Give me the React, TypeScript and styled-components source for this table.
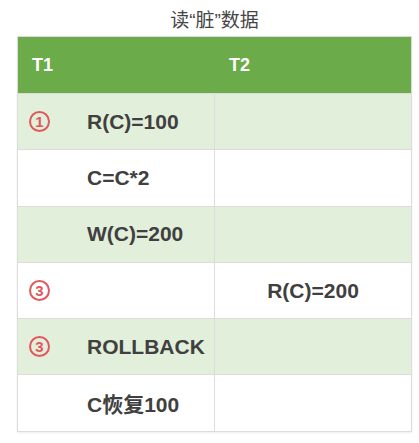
import styled, { createGlobalStyle } from "styled-components";

const GlobalStyle = createGlobalStyle`
  html, body {
    margin: 0;
    padding: 0;
    background: #ffffff;
  }
  body {
    font-family: "Liberation Sans", Arial, "Noto Sans CJK SC", sans-serif;
  }
`;

type Step = {
  mark?: string;
  t1?: string;
  t2?: string;
  shaded: boolean;
};

const steps: Step[] = [
  { mark: "1", t1: "R(C)=100", shaded: true },
  { t1: "C=C*2", shaded: false },
  { t1: "W(C)=200", shaded: true },
  { mark: "3", t2: "R(C)=200", shaded: false },
  { mark: "3", t1: "ROLLBACK", shaded: true },
  { t1: "C恢复100", shaded: false },
];

const Page = styled.div`
  width: 419px;
  height: 443px;
  display: flex;
  flex-direction: column;
`;

const Title = styled.h1`
  margin: 0;
  height: 36px;
  display: flex;
  align-items: center;
  justify-content: center;
  padding-left: 10px;
  font-family: "Liberation Sans", "Noto Sans CJK SC", sans-serif;
  font-size: 19px;
  font-weight: 400;
  color: #454545;
`;

const Table = styled.div`
  margin-left: 17px;
  width: 395px;
  border: 1px solid #dcdcdc;
  box-sizing: border-box;
  box-shadow: 0 1px 2px rgba(0, 0, 0, 0.08);
`;

const HeaderRow = styled.div`
  display: grid;
  grid-template-columns: 197px 1fr;
  height: 56px;
  background: #6cab49;
  color: #ffffff;
  font-size: 18px;
  font-weight: 700;
`;

const HeaderCell = styled.div`
  display: flex;
  align-items: center;
  padding-left: 14px;
`;

const Row = styled.div<{ $shaded: boolean }>`
  display: grid;
  grid-template-columns: 197px 1fr;
  height: 56.3px;
  box-sizing: border-box;
  border-top: 1px solid #dcdcdc;
  background: ${({ $shaded }) => ($shaded ? "#e2efda" : "#ffffff")};
  color: #404040;
  font-size: 21px;
  font-weight: 700;
`;

const LeftCell = styled.div`
  display: flex;
  align-items: center;
  gap: 37px;
  padding-left: 11px;
  border-right: 1px solid #dcdcdc;
`;

const RightCell = styled.div`
  display: flex;
  align-items: center;
  justify-content: center;
`;

const MarkSlot = styled.div`
  width: 21px;
  height: 21px;
  flex: none;
`;

const Mark = styled.span`
  box-sizing: border-box;
  width: 21px;
  height: 21px;
  border: 2px solid #e0585c;
  border-radius: 50%;
  display: flex;
  align-items: center;
  justify-content: center;
  color: #e0585c;
  font-size: 15px;
  font-weight: 700;
  line-height: 1;
`;

export default function App() {
  return (
    <Page>
      <GlobalStyle />
      <Title>读“脏”数据</Title>
      <Table>
        <HeaderRow>
          <HeaderCell>T1</HeaderCell>
          <HeaderCell>T2</HeaderCell>
        </HeaderRow>
        {steps.map((s, i) => (
          <Row key={i} $shaded={s.shaded}>
            <LeftCell>
              <MarkSlot>{s.mark && <Mark>{s.mark}</Mark>}</MarkSlot>
              {s.t1}
            </LeftCell>
            <RightCell>{s.t2}</RightCell>
          </Row>
        ))}
      </Table>
    </Page>
  );
}
